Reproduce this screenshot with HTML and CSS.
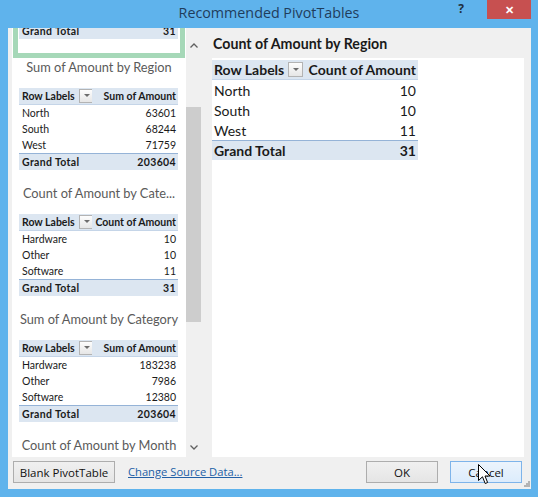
FILE: index.html
```html
<!DOCTYPE html>
<html lang="en">
<head>
<meta charset="UTF-8">
<title>Recommended PivotTables</title>
<link rel="stylesheet" href="styles.css">
</head>
<body>
<div class="window">
    <div class="titlebar">
        <span></span>
        <span class="title">Recommended PivotTables</span>
        <div class="controls">
            <span class="help">?</span>
            <span class="close">&#x2715;</span>
        </div>
    </div>

    <div class="dialog">
        <div class="main">
            <div class="gallery">
                <div class="gallery-list">
                    <div class="gallery-track">
                        <div class="item selected">
                            <div class="item-title">Count of Amount by Region</div>
                            <table class="pivot pivot-sm">
                                <tr class="head"><td><span class="lbl">Row Labels <i class="dd"></i></span></td><td class="num">Count of Amount</td></tr>
                                <tr><td>North</td><td class="num">10</td></tr>
                                <tr><td>South</td><td class="num">10</td></tr>
                                <tr><td>West</td><td class="num">11</td></tr>
                                <tr class="total"><td>Grand Total</td><td class="num">31</td></tr>
                            </table>
                        </div>
                        <div class="item">
                            <div class="item-title">Sum of Amount by Region</div>
                            <table class="pivot pivot-sm">
                                <tr class="head"><td><span class="lbl">Row Labels <i class="dd"></i></span></td><td class="num">Sum of Amount</td></tr>
                                <tr><td>North</td><td class="num">63601</td></tr>
                                <tr><td>South</td><td class="num">68244</td></tr>
                                <tr><td>West</td><td class="num">71759</td></tr>
                                <tr class="total"><td>Grand Total</td><td class="num">203604</td></tr>
                            </table>
                        </div>
                        <div class="item">
                            <div class="item-title">Count of Amount by Cate...</div>
                            <table class="pivot pivot-sm">
                                <tr class="head"><td><span class="lbl">Row Labels <i class="dd"></i></span></td><td class="num">Count of Amount</td></tr>
                                <tr><td>Hardware</td><td class="num">10</td></tr>
                                <tr><td>Other</td><td class="num">10</td></tr>
                                <tr><td>Software</td><td class="num">11</td></tr>
                                <tr class="total"><td>Grand Total</td><td class="num">31</td></tr>
                            </table>
                        </div>
                        <div class="item">
                            <div class="item-title">Sum of Amount by Category</div>
                            <table class="pivot pivot-sm">
                                <tr class="head"><td><span class="lbl">Row Labels <i class="dd"></i></span></td><td class="num">Sum of Amount</td></tr>
                                <tr><td>Hardware</td><td class="num">183238</td></tr>
                                <tr><td>Other</td><td class="num">7986</td></tr>
                                <tr><td>Software</td><td class="num">12380</td></tr>
                                <tr class="total"><td>Grand Total</td><td class="num">203604</td></tr>
                            </table>
                        </div>
                        <div class="item">
                            <div class="item-title">Count of Amount by Month</div>
                        </div>
                    </div>
                </div>
                <div class="scrollbar">
                    <span class="arrow arrow-up">
                        <svg width="8" height="5" viewBox="0 0 8 5"><polyline points="0.5,4.5 4,1 7.5,4.5" fill="none" stroke="#606060" stroke-width="1.3"/></svg>
                    </span>
                    <div class="thumb"></div>
                    <span class="arrow arrow-down">
                        <svg width="8" height="5" viewBox="0 0 8 5"><polyline points="0.5,0.5 4,4 7.5,0.5" fill="none" stroke="#606060" stroke-width="1.3"/></svg>
                    </span>
                </div>
            </div>

            <div class="preview">
                <div class="preview-title">Count of Amount by Region</div>
                <div class="preview-body">
                    <table class="pivot pivot-lg">
                        <tr class="head"><td><span class="lbl">Row Labels <i class="dd"></i></span></td><td class="num">Count of Amount</td></tr>
                        <tr><td>North</td><td class="num">10</td></tr>
                        <tr><td>South</td><td class="num">10</td></tr>
                        <tr><td>West</td><td class="num">11</td></tr>
                        <tr class="total"><td>Grand Total</td><td class="num">31</td></tr>
                    </table>
                </div>
            </div>
        </div>

        <div class="footer">
            <button class="btn btn-blank">Blank PivotTable</button>
            <a class="link" href="#">Change Source Data...</a>
            <span class="spacer"></span>
            <button class="btn">OK</button>
            <button class="btn btn-hover">Cancel
                <svg class="cursor" width="13" height="21" viewBox="0 0 13 21"><path d="M0.5,0.5 L0.5,16.5 L4.5,12.8 L7.2,19.5 L9.6,18.5 L7,12 L12,12 Z" fill="#fff" stroke="#000" stroke-width="1"/></svg>
            </button>
            <span class="grip">
                <svg width="7" height="7" viewBox="0 0 7 7" fill="#b4b4b4"><rect x="5" y="1" width="2" height="2"/><rect x="3" y="3" width="2" height="2"/><rect x="5" y="3" width="2" height="2"/><rect x="1" y="5" width="2" height="2"/><rect x="3" y="5" width="2" height="2"/><rect x="5" y="5" width="2" height="2"/></svg>
            </span>
        </div>
    </div>
</div>
</body>
</html>
```

FILE: styles.css
```css
body {
    margin: 0;
    font-family: 'Open Sans', 'Noto Sans', sans-serif;
    color: #222;
}

.window {
    width: 538px;
    height: 497px;
    background-color: #5fb3ec;
    display: flex;
    flex-direction: column;
}

.titlebar {
    height: 28px;
    display: grid;
    grid-template-columns: 1fr auto 1fr;
}

.title {
    font-size: 14.3px;
    color: #1f3d5c;
    line-height: 26px;
}

.controls {
    display: flex;
    justify-content: flex-end;
    align-items: flex-start;
    padding-right: 7px;
}

.help {
    font-size: 12px;
    font-weight: bold;
    color: #1f2f3f;
    line-height: 18px;
    margin-right: 23px;
}

.close {
    width: 44px;
    height: 19px;
    background-color: #c75050;
    color: #fff;
    font-size: 11px;
    font-weight: bold;
    text-align: center;
    line-height: 19px;
}

.dialog {
    flex: 1;
    margin: 0 7px 8px 8px;
    background-color: #f0f0f0;
    display: flex;
    flex-direction: column;
}

.main {
    display: flex;
    height: 429px;
}

/* gallery on the left */
.gallery {
    display: flex;
    margin-left: 4px;
}

.gallery-list {
    width: 174px;
    background-color: #fff;
    overflow: hidden;
}

.gallery-track {
    margin-top: -96px;
}

.item {
    width: 172px;
    height: 126px;
    margin-left: 1px;
    box-sizing: border-box;
    padding-top: 1px;
}

.item.selected {
    box-shadow: inset 0 0 0 5px #a6d8b8;
}

.item.selected .pivot {
    position: relative;
    top: -5px;
}

.item-title {
    font-family: 'Lato', 'Open Sans', sans-serif;
    font-size: 12.8px;
    line-height: 17px;
    color: #5a5a5a;
    text-align: center;
    margin-bottom: 12px;
}

.scrollbar {
    width: 15px;
    display: flex;
    flex-direction: column;
    align-items: center;
}

.arrow {
    display: flex;
    justify-content: center;
    align-items: center;
}

.arrow-up {
    height: 34px;
}

.arrow-down {
    height: 20px;
    margin-top: auto;
}

.thumb {
    width: 15px;
    height: 215px;
    margin-top: 45px;
    background-color: #cdcdcd;
}

/* pivot tables */
.pivot {
    border-collapse: collapse;
    table-layout: fixed;
    font-family: 'Lato', 'Liberation Sans', sans-serif;
    color: #1a1a1a;
}

.pivot td {
    padding: 0 2px;
    white-space: nowrap;
    overflow: hidden;
}

.pivot .num {
    text-align: right;
}

.pivot .head td,
.pivot .total td {
    background-color: #dce6f1;
    font-weight: bold;
}

.pivot .head td {
    border-bottom: 1px solid #c5d5e8;
}

.pivot .total td {
    border-top: 1px solid #95b3d7;
}

.lbl {
    display: flex;
    align-items: center;
    gap: 4px;
}

.dd {
    display: inline-block;
    flex: none;
    width: 13px;
    height: 13px;
    border: 1px solid #b3b3b3;
    background: linear-gradient(#fdfdfd, #e6e6e6);
    position: relative;
}

.dd::after {
    content: "";
    position: absolute;
    left: 4px;
    top: 5px;
    border-left: 3px solid transparent;
    border-right: 3px solid transparent;
    border-top: 3px solid #6d6d6d;
}

.pivot-sm {
    width: 159px;
    margin-left: 6px;
    font-size: 10.5px;
}

.pivot-sm td {
    height: 16px;
    padding: 0 2px 0 3px;
}

.pivot-sm .total td {
    letter-spacing: 0.35px;
}

.pivot-sm td:first-child {
    width: 68px;
}

.pivot-sm .dd {
    width: 13px;
    height: 12px;
}

.pivot-sm .dd::after {
    top: 4px;
}

.pivot-lg {
    width: 206px;
    margin-top: 2px;
    font-size: 14px;
}

.pivot-lg td {
    height: 20px;
}

.pivot-lg .head td,
.pivot-lg .total td {
    height: 19px;
}

.pivot-lg td:first-child {
    width: 88px;
}

/* preview on the right */
.preview {
    margin-left: 11px;
    width: 312px;
    display: flex;
    flex-direction: column;
}

.preview-title {
    height: 30px;
    box-sizing: border-box;
    padding: 7px 0 0 1px;
    font-family: 'Lato', 'Liberation Sans', sans-serif;
    font-weight: bold;
    font-size: 14.2px;
    color: #1a1a1a;
}

.preview-body {
    flex: 1;
    background-color: #fff;
}

/* buttons row */
.footer {
    flex: 1;
    display: flex;
    align-items: flex-start;
    padding: 4px 0 0 5px;
}

.btn {
    height: 22px;
    width: 72px;
    margin-left: 12px;
    padding: 0;
    border: 1px solid #adadad;
    background: linear-gradient(#f0f0f0, #e5e5e5);
    font-family: 'Open Sans', 'Noto Sans', sans-serif;
    font-size: 11.5px;
    color: #111;
    position: relative;
}

.btn-blank {
    width: 102px;
    margin-left: 0;
}

.btn-hover {
    border-color: #7eb4ea;
    background: linear-gradient(#ecf4fc, #dcecfc);
}

.cursor {
    position: absolute;
    left: 27px;
    top: 2px;
}

.link {
    margin-left: 13px;
    font-size: 11.2px;
    line-height: 22px;
    color: #2260a6;
}

.spacer {
    flex: 1;
}

.grip {
    align-self: flex-end;
    margin: 0 1px 2px 1px;
    display: flex;
}
```
